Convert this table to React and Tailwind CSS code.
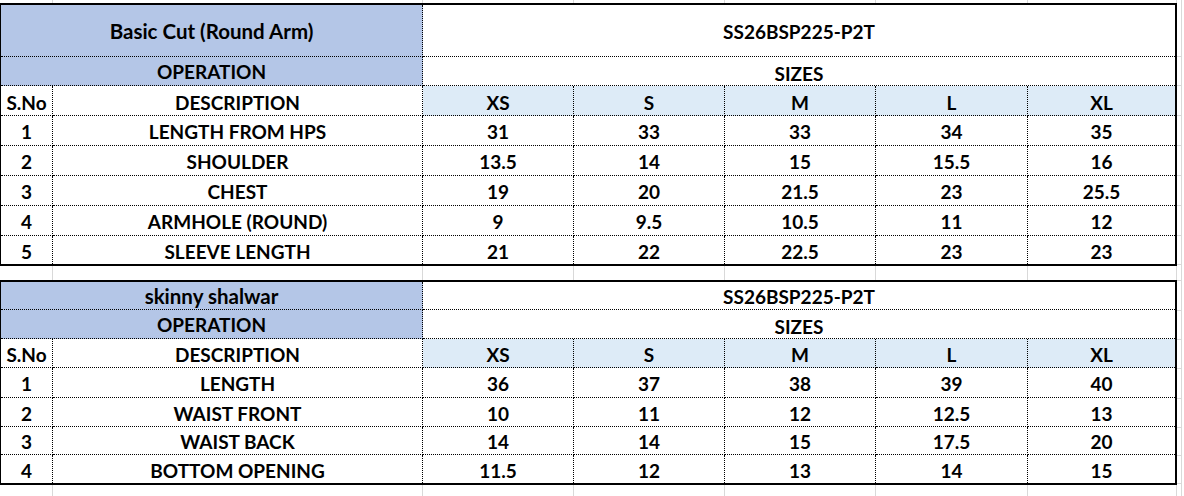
const cols = 'grid grid-cols-[52px_370px_151px_151px_151px_152px_147px]'
const gapCols = 'grid grid-cols-[53px_370px_151px_151px_151px_152px_149px]'

const sheets = [
  {
    title: 'Basic Cut (Round Arm)',
    head: ['h-[52px]', 'h-[29px]', 'h-[30px]'],
    rowH: ['h-[30px]', 'h-[30px]', 'h-[30px]', 'h-[30px]', 'h-[28px]'],
    rows: [
      ['1', 'LENGTH FROM HPS', '31', '33', '33', '34', '35'],
      ['2', 'SHOULDER', '13.5', '14', '15', '15.5', '16'],
      ['3', 'CHEST', '19', '20', '21.5', '23', '25.5'],
      ['4', 'ARMHOLE (ROUND)', '9', '9.5', '10.5', '11', '12'],
      ['5', 'SLEEVE LENGTH', '21', '22', '22.5', '23', '23'],
    ],
  },
  {
    title: 'skinny shalwar',
    head: ['h-[28px]', 'h-[29px]', 'h-[29px]'],
    rowH: ['h-[30px]', 'h-[29px]', 'h-[28px]', 'h-[28px]'],
    rows: [
      ['1', 'LENGTH', '36', '37', '38', '39', '40'],
      ['2', 'WAIST FRONT', '10', '11', '12', '12.5', '13'],
      ['3', 'WAIST BACK', '14', '14', '15', '17.5', '20'],
      ['4', 'BOTTOM OPENING', '11.5', '12', '13', '14', '15'],
    ],
  },
]

const sizes = ['XS', 'S', 'M', 'L', 'XL']

// thin strip of plain excel gridlines between / around the tables
function GridStrip({ h }) {
  return (
    <div className={`${gapCols} ${h}`}>
      {[0, 1, 2, 3, 4, 5, 6].map((i) => (
        <div key={i} className="border-r border-[#d9d9d9]" />
      ))}
    </div>
  )
}

function Sheet({ sheet }) {
  const dot = 'border-dotted border-black'
  return (
    <div className="border-l border-t-2 border-r-2 border-b-2 border-black">
      <div className={cols}>
        <div className={`col-span-2 bg-[#b4c6e7] border-r border-b ${dot} flex items-center justify-center pt-[2px] text-[20.5px] ${sheet.head[0]}`}>
          {sheet.title}
        </div>
        <div className={`col-span-5 border-b ${dot} flex items-center justify-center pt-[2px] ${sheet.head[0]}`}>
          SS26BSP225-P2T
        </div>

        <div className={`col-span-2 bg-[#b4c6e7] border-r border-b ${dot} flex items-center justify-center pt-[2px] ${sheet.head[1]}`}>
          OPERATION
        </div>
        <div className={`col-span-5 border-b ${dot} flex items-end justify-center pb-[2px] ${sheet.head[1]}`}>
          SIZES
        </div>

        <div className={`border-r border-b ${dot} flex items-center justify-center pt-[4px] ${sheet.head[2]}`}>S.No</div>
        <div className={`border-r border-b ${dot} flex items-center justify-center pt-[4px] ${sheet.head[2]}`}>DESCRIPTION</div>
        {sizes.map((s, i) => (
          <div
            key={s}
            className={`bg-[#ddebf7] border-b ${i < 4 ? 'border-r' : ''} ${dot} flex items-center justify-center pt-[4px] ${sheet.head[2]}`}
          >
            {s}
          </div>
        ))}

        {sheet.rows.map((row, r) =>
          row.map((cell, c) => (
            <div
              key={r + '-' + c}
              className={`${c < 6 ? 'border-r' : ''} ${r < sheet.rows.length - 1 ? 'border-b' : ''} ${dot} flex items-center justify-center pt-[3px] ${sheet.rowH[r]}`}
            >
              {cell}
            </div>
          ))
        )}
      </div>
    </div>
  )
}

// right margin: gridlines of the next excel column
const marginRows = [
  'h-[57px]', 'h-[29px]', 'h-[30px]', 'h-[30px]', 'h-[30px]', 'h-[30px]', 'h-[30px]',
  'h-[29px]', 'h-[16px]', 'h-[30px]', 'h-[29px]', 'h-[29px]', 'h-[30px]', 'h-[29px]',
  'h-[28px]', 'h-[28px]',
]

export default function App() {
  return (
    <div className="w-[1184px] h-[496px] overflow-hidden bg-white flex text-black font-bold text-[19px] leading-none font-['Lato',sans-serif]">
      <div className="w-[1177px] flex flex-col">
        <GridStrip h="h-[3px]" />
        <Sheet sheet={sheets[0]} />
        <GridStrip h="h-[15px]" />
        <Sheet sheet={sheets[1]} />
        <GridStrip h="h-[12px]" />
      </div>
      <div className="w-[5px] h-full border-r border-[#d9d9d9] flex flex-col">
        {marginRows.map((h, i) => (
          <div key={i} className={`${h} border-b border-[#d9d9d9]`} />
        ))}
      </div>
    </div>
  )
}
